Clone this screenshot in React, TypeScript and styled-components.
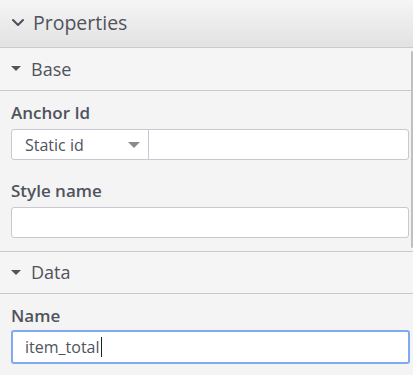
import React from 'react';
import styled, { createGlobalStyle } from 'styled-components';

const GlobalStyle = createGlobalStyle`
  html, body {
    margin: 0;
    padding: 0;
    background: #f4f4f4;
  }
  body {
    font-family: 'Open Sans', 'Noto Sans', sans-serif;
    color: #505259;
  }
`;

const Panel = styled.div`
  position: relative;
  width: 413px;
  height: 375px;
  overflow: hidden;
  background: #f4f4f4;
`;

const PanelHeader = styled.div`
  height: 48px;
  box-sizing: border-box;
  display: flex;
  align-items: center;
  gap: 8px;
  padding: 0 0 3px 11px;
  background: linear-gradient(#f5f5f5, #e2e2e2);
  border-bottom: 1px solid #cccccc;
  font-size: 19.5px;
  color: #4f535c;
`;

const Section = styled.section<{ first?: boolean }>`
  border-top: ${(p) => (p.first ? 'none' : '1px solid #c9c7d3')};
`;

const SectionHeader = styled.div<{ tall?: boolean }>`
  height: ${(p) => (p.tall ? '43px' : '42px')};
  box-sizing: border-box;
  display: flex;
  align-items: center;
  gap: 10px;
  padding: 0 0 1px 11px;
  background: #f5f5f5;
  border-bottom: 1px solid #c9c7d3;
  font-size: 18px;
  color: #4f535c;
`;

const Caret = styled.span`
  width: 0;
  height: 0;
  border-left: 5px solid transparent;
  border-right: 5px solid transparent;
  border-top: 5px solid #555555;
`;

const SectionBody = styled.div`
  padding: 11px 4px 13px 11px;
  display: flex;
  flex-direction: column;
  gap: 20px;
`;

const Field = styled.div`
  display: flex;
  flex-direction: column;
`;

const Label = styled.label`
  font-size: 17px;
  font-weight: 600;
  line-height: 22px;
  margin-bottom: 5px;
  color: #4f535c;
`;

const Row = styled.div`
  display: flex;
  height: 31px;
  box-sizing: border-box;
  border: 1px solid #c9c8d2;
  border-radius: 3px;
  background: #ffffff;
  overflow: hidden;
`;

const SelectBox = styled.div`
  width: 137px;
  flex: none;
  display: flex;
  align-items: center;
  justify-content: space-between;
  padding: 0 8px 0 13px;
  box-sizing: border-box;
  border-right: 1px solid #c9c8d2;
  font-size: 16px;
  color: #4f535c;
`;

const SelectArrow = styled.span`
  width: 0;
  height: 0;
  border-left: 6px solid transparent;
  border-right: 6px solid transparent;
  border-top: 6px solid #8a8a8a;
`;

const TextBox = styled.div<{ focused?: boolean }>`
  height: ${(p) => (p.focused ? '34px' : '31px')};
  box-sizing: border-box;
  display: flex;
  align-items: center;
  padding: 0 ${(p) => (p.focused ? '12px' : '13px')};
  border: ${(p) => (p.focused ? '2px solid #7faaf2' : '1px solid #c9c8d2')};
  border-radius: 3px;
  background: #ffffff;
  font-size: 16px;
  color: #4f535c;
  margin-top: ${(p) => (p.focused ? '-2px' : '0')};
  margin-right: ${(p) => (p.focused ? '-1px' : '0')};
`;

const InlineInput = styled.div`
  flex: 1;
`;

const TextCursor = styled.span`
  display: inline-block;
  width: 1px;
  height: 20px;
  background: #222222;
  margin-left: 1px;
`;

const ScrollThumb = styled.div`
  position: absolute;
  right: 0;
  top: 51px;
  width: 2px;
  height: 197px;
  background: #c0c0c0;
  border-radius: 1px;
`;

const Chevron = () => (
  <svg width="14" height="14" viewBox="0 0 14 14" fill="none">
    <path d="M2 5l5 5 5-5" stroke="#4a4f5c" strokeWidth="2" strokeLinecap="round" strokeLinejoin="round" />
  </svg>
);

export default function App() {
  return (
    <>
      <GlobalStyle />
      <Panel>
        <PanelHeader>
          <Chevron />
          Properties
        </PanelHeader>

        <Section first>
          <SectionHeader tall>
            <Caret />
            Base
          </SectionHeader>
          <SectionBody>
            <Field>
              <Label>Anchor Id</Label>
              <Row>
                <SelectBox>
                  Static id
                  <SelectArrow />
                </SelectBox>
                <InlineInput />
              </Row>
            </Field>
            <Field>
              <Label>Style name</Label>
              <TextBox />
            </Field>
          </SectionBody>
        </Section>

        <Section>
          <SectionHeader>
            <Caret />
            Data
          </SectionHeader>
          <SectionBody>
            <Field>
              <Label>Name</Label>
              <TextBox focused>
                item_total
                <TextCursor />
              </TextBox>
            </Field>
          </SectionBody>
        </Section>

        <ScrollThumb />
      </Panel>
    </>
  );
}
